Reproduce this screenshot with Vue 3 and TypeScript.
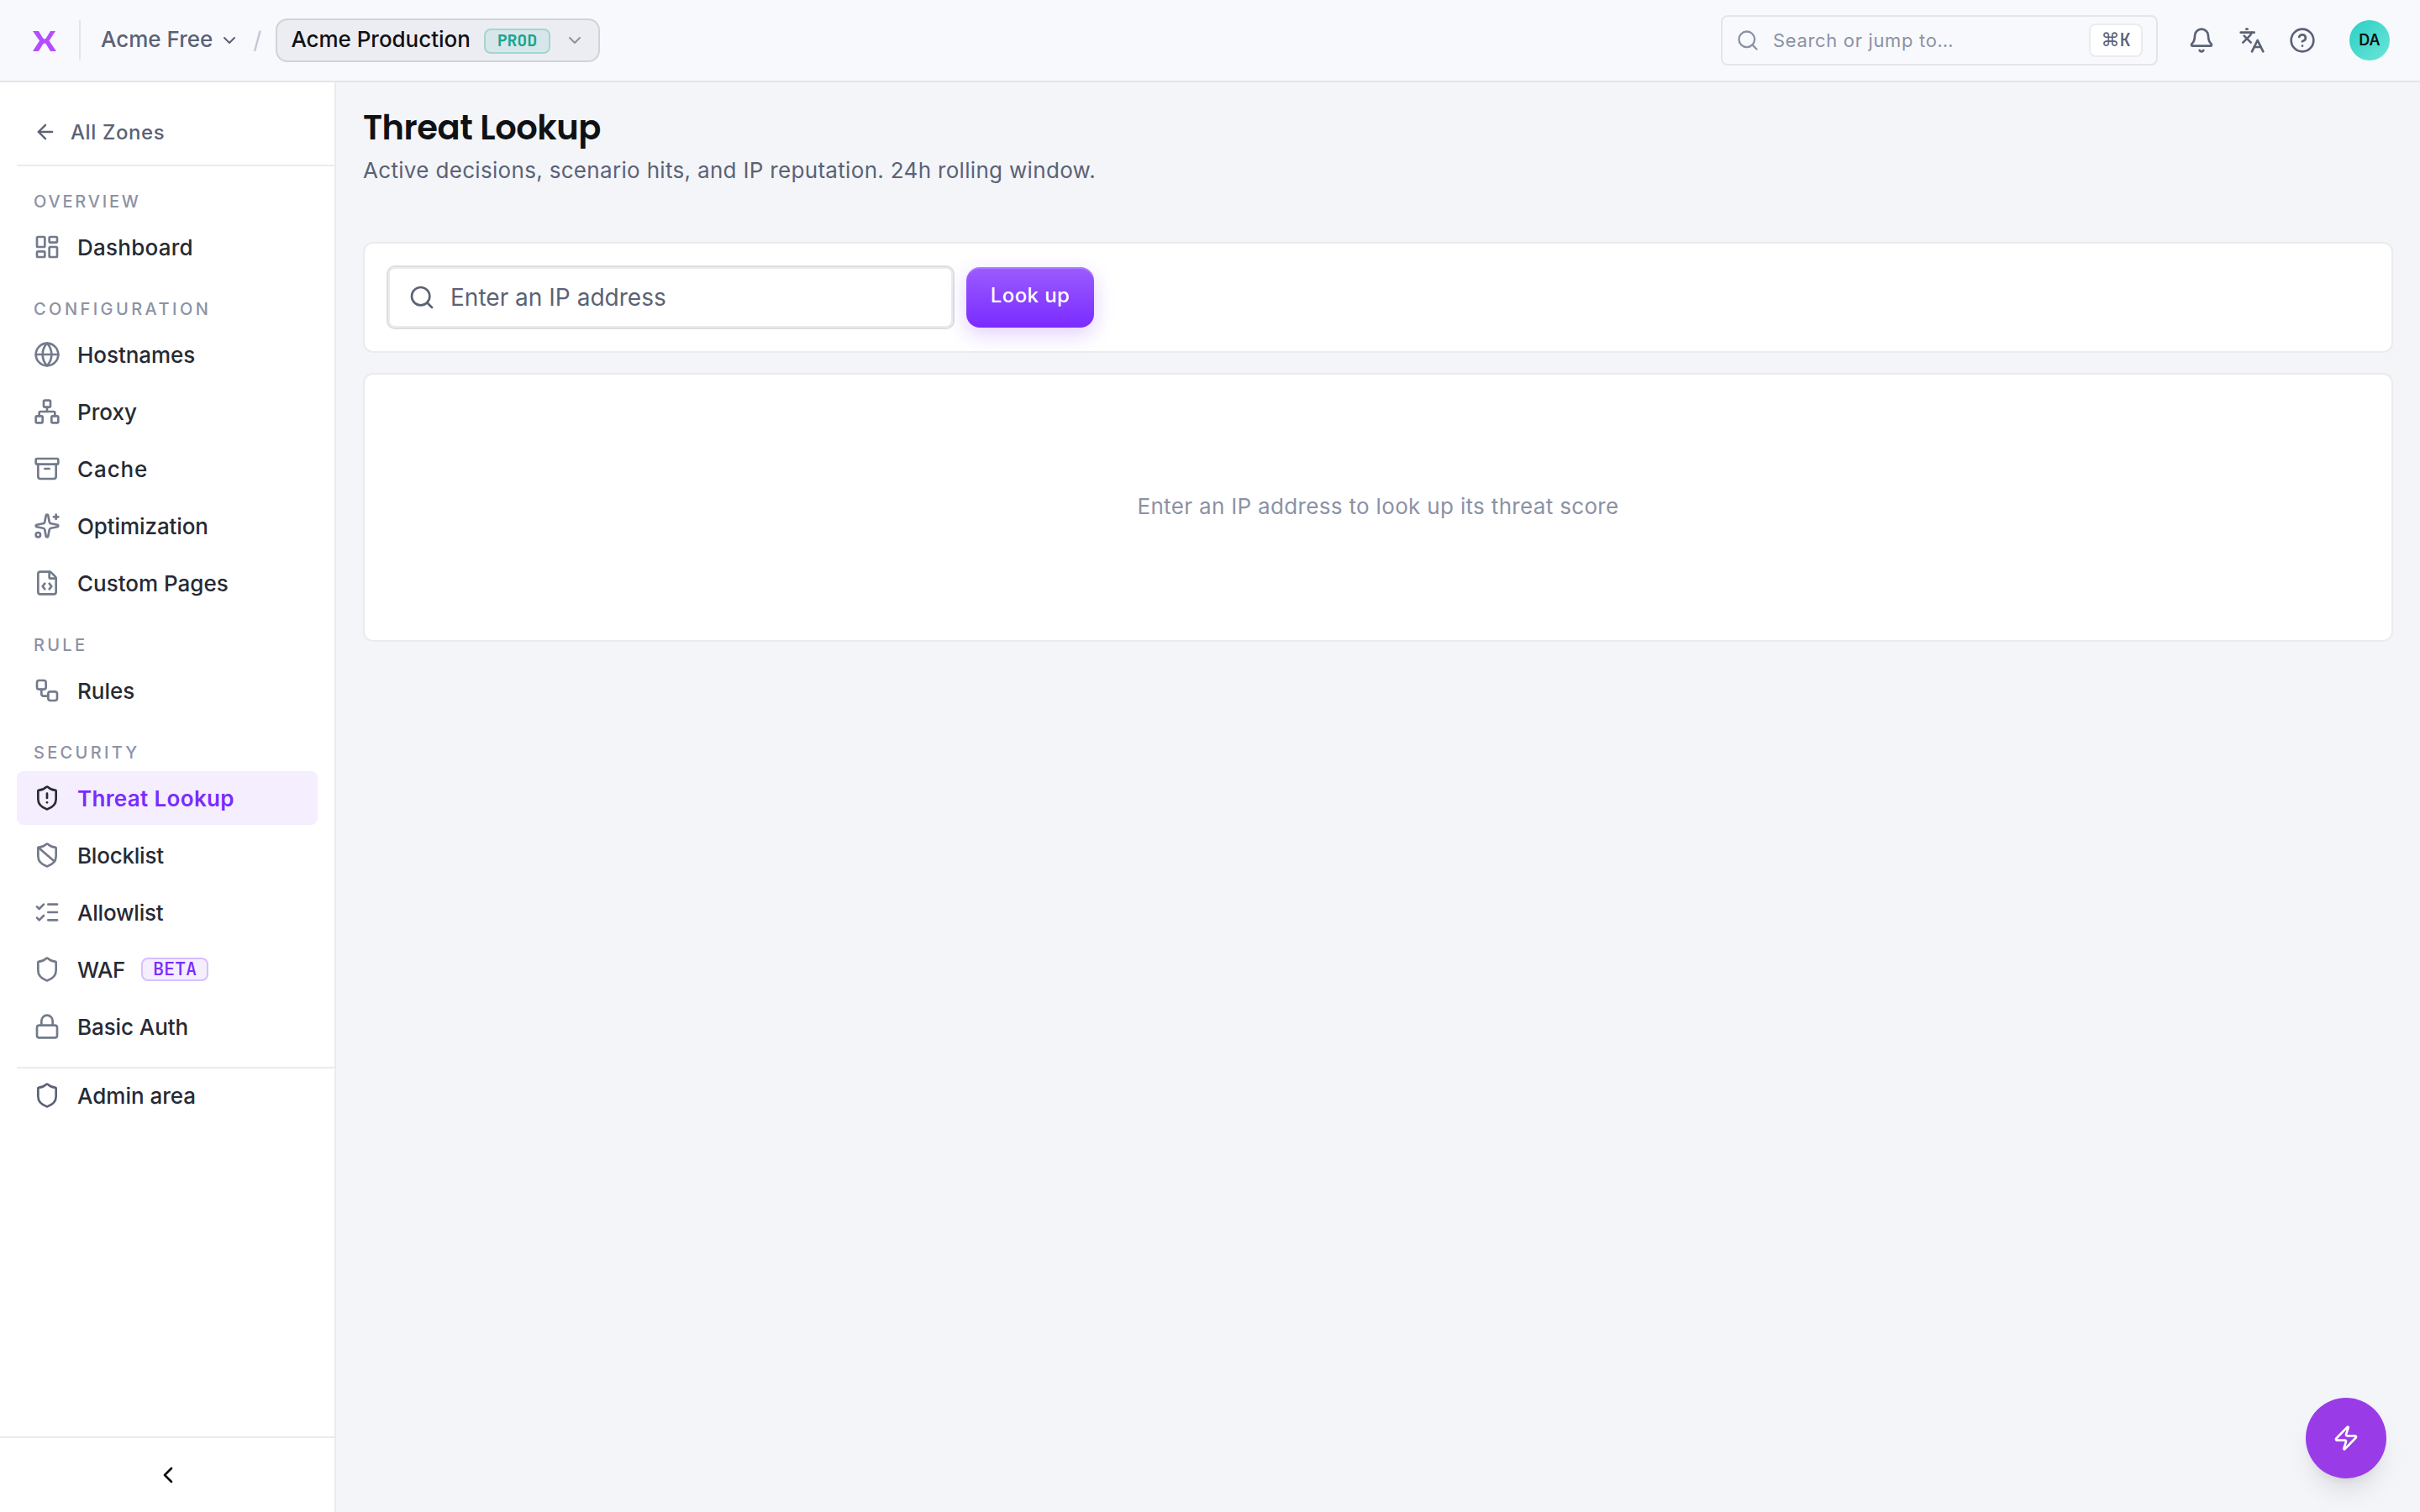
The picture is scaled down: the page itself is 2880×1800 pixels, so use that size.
<script setup lang="ts">
interface Shape { tag: string; a: Record<string, string | number> }
interface Item { label: string; icon: string; track: number; active?: boolean; badge?: string }
interface Group { title: string; track: number; items: Item[] }

const p = (d: string): Shape => ({ tag: 'path', a: { d } })
const r = (x: number, y: number, width: number, height: number, rx: number): Shape => ({ tag: 'rect', a: { x, y, width, height, rx } })
const c = (cx: number, cy: number, rad: number): Shape => ({ tag: 'circle', a: { cx, cy, r: rad } })

const shield = 'M20 13c0 5-3.5 7.5-7.66 8.95a1 1 0 0 1-.67-.01C7.5 20.5 4 18 4 13V6a1 1 0 0 1 1-1c2 0 4.5-1.2 6.24-2.72a1.17 1.17 0 0 1 1.52 0C14.51 3.81 17 5 19 5a1 1 0 0 1 1 1z'

const icons: Record<string, Shape[]> = {
  back: [p('m12 19-7-7 7-7'), p('M19 12H5')],
  down: [p('m6 9 6 6 6-6')],
  left: [p('m15 18-6-6 6-6')],
  dashboard: [r(3, 3, 7, 9, 1), r(14, 3, 7, 5, 1), r(14, 12, 7, 9, 1), r(3, 16, 7, 5, 1)],
  globe: [c(12, 12, 10), p('M12 2a14.5 14.5 0 0 0 0 20 14.5 14.5 0 0 0 0-20'), p('M2 12h20')],
  network: [r(16, 16, 6, 6, 1), r(2, 16, 6, 6, 1), r(9, 2, 6, 6, 1), p('M5 16v-3a1 1 0 0 1 1-1h12a1 1 0 0 1 1 1v3'), p('M12 12V8')],
  archive: [r(2, 3, 20, 5, 1), p('M4 8v11a2 2 0 0 0 2 2h12a2 2 0 0 0 2-2V8'), p('M10 12h4')],
  sparkles: [p('M11.017 2.814a1 1 0 0 1 1.966 0l1.051 5.558a2 2 0 0 0 1.594 1.594l5.558 1.051a1 1 0 0 1 0 1.966l-5.558 1.051a2 2 0 0 0-1.594 1.594l-1.051 5.558a1 1 0 0 1-1.966 0l-1.051-5.558a2 2 0 0 0-1.594-1.594l-5.558-1.051a1 1 0 0 1 0-1.966l5.558-1.051a2 2 0 0 0 1.594-1.594z'), p('M20 2v4'), p('M22 4h-4'), c(4, 20, 2)],
  fileCode: [p('M6 22a2 2 0 0 1-2-2V4a2 2 0 0 1 2-2h8a2.4 2.4 0 0 1 1.704.706l3.588 3.588A2.4 2.4 0 0 1 20 8v12a2 2 0 0 1-2 2z'), p('M14 2v5a1 1 0 0 0 1 1h5'), p('M10 12.5 8 15l2 2.5'), p('m14 12.5 2 2.5-2 2.5')],
  workflow: [r(3, 3, 8, 8, 2), p('M7 11v4a2 2 0 0 0 2 2h4'), r(13, 13, 8, 8, 2)],
  shieldAlert: [p(shield), p('M12 8v4'), p('M12 16h.01')],
  shieldBan: [p(shield), p('m4.243 5.21 14.39 12.472')],
  listChecks: [p('M13 5h8'), p('M13 12h8'), p('M13 19h8'), p('m3 17 2 2 4-4'), p('m3 7 2 2 4-4')],
  shield: [p(shield)],
  lock: [r(3, 11, 18, 11, 2), p('M7 11V7a5 5 0 0 1 10 0v4')],
  search: [p('m21 21-4.34-4.34'), c(11, 11, 8)],
  bell: [p('M10.268 21a2 2 0 0 0 3.464 0'), p('M3.262 15.326A1 1 0 0 0 4 17h16a1 1 0 0 0 .74-1.673C19.41 13.956 18 12.499 18 8A6 6 0 0 0 6 8c0 4.499-1.411 5.956-2.738 7.326')],
  languages: [p('m5 8 6 6'), p('m4 14 6-6 2-3'), p('M2 5h12'), p('M7 2h1'), p('m22 22-5-10-5 10'), p('M14 18h6')],
  help: [c(12, 12, 10), p('M9.09 9a3 3 0 0 1 5.83 1c0 2-3 3-3 3'), p('M12 17h.01')],
  zap: [p('M4 14a1 1 0 0 1-.78-1.63l9.9-10.2a.5.5 0 0 1 .86.46l-1.92 6.02A1 1 0 0 0 13 10h7a1 1 0 0 1 .78 1.63l-9.9 10.2a.5.5 0 0 1-.86-.46l1.92-6.02A1 1 0 0 0 11 14z')]
}

// track is the letter spacing of a label, in px
const groups: Group[] = [
  { title: 'Overview', track: 1.4, items: [{ label: 'Dashboard', icon: 'dashboard', track: 0.13 }] },
  {
    title: 'Configuration',
    track: 1.72,
    items: [
      { label: 'Hostnames', icon: 'globe', track: -0.03 },
      { label: 'Proxy', icon: 'network', track: 0.02 },
      { label: 'Cache', icon: 'archive', track: 0.45 },
      { label: 'Optimization', icon: 'sparkles', track: -0.05 },
      { label: 'Custom Pages', icon: 'fileCode', track: 0 }
    ]
  },
  { title: 'Rule', track: 1.65, items: [{ label: 'Rules', icon: 'workflow', track: 0 }] },
  {
    title: 'Security',
    track: 1.65,
    items: [
      { label: 'Threat Lookup', icon: 'shieldAlert', track: 0.17, active: true },
      { label: 'Blocklist', icon: 'shieldBan', track: -0.11 },
      { label: 'Allowlist', icon: 'listChecks', track: -0.1 },
      { label: 'WAF', icon: 'shield', track: -0.2, badge: 'BETA' },
      { label: 'Basic Auth', icon: 'lock', track: -0.04 }
    ]
  }
]

const Icon = (props: { name: string }) =>
  h('svg', { viewBox: '0 0 24 24', fill: 'none', stroke: 'currentColor', 'stroke-width': 2, 'stroke-linecap': 'round', 'stroke-linejoin': 'round' },
    icons[props.name].map((s) => h(s.tag, s.a)))
Icon.props = ['name']
</script>

<script lang="ts">
import { h } from 'vue'
</script>

<template>
  <div class="app">
    <header class="topbar">
      <svg class="logo" viewBox="0 0 28 24"><path d="M0 0h7l5.200 8.500q1.800 2.200 3.600 0L21 0h6l-7.500 11.500L28 24h-7l-5.200-8.500q-1.800-2.200-3.600 0L7 24H0l8-12.500z" fill="#b44dff" /></svg>
      <span class="rule"></span>
      <button class="org"><span class="name">Acme Free</span><Icon name="down" class="i12" /></button>
      <span class="slash">/</span>
      <button class="zone"><span class="name">Acme Production</span><span class="prod">PROD</span><Icon name="down" class="i12 zone-chev" /></button>
      <div class="search">
        <Icon name="search" class="i14" />
        <span class="search-text">Search or jump to…</span>
        <kbd><span class="cmd">⌘</span>K</kbd>
      </div>
      <nav class="tools">
        <Icon name="bell" class="i16" />
        <Icon name="languages" class="i16" />
        <Icon name="help" class="i16" />
      </nav>
      <span class="avatar">DA</span>
    </header>
    <div class="body">
      <aside class="sidebar">
        <div class="scroll">
          <a class="back"><Icon name="back" class="i14" /><span>All Zones</span></a>
          <section v-for="g in groups" :key="g.title" class="group">
            <h2 :style="{ letterSpacing: g.track + 'px' }">{{ g.title }}</h2>
            <a v-for="i in g.items" :key="i.label" class="item" :class="{ active: i.active }">
              <Icon :name="i.icon" class="i16" /><span :style="{ letterSpacing: i.track + 'px' }">{{ i.label }}</span><em v-if="i.badge">{{ i.badge }}</em>
            </a>
          </section>
          <div class="admin">
            <a class="item"><Icon name="shield" class="i16" /><span>Admin area</span></a>
          </div>
        </div>
        <button class="collapse"><Icon name="left" class="i16" /></button>
      </aside>
      <main>
        <h1>Threat Lookup</h1>
        <p class="sub">Active decisions, scenario hits, and IP reputation. 24h rolling window.</p>
        <div class="card form">
          <label class="field"><Icon name="search" class="i16" /><span>Enter an IP address</span></label>
          <button class="cta">Look up</button>
        </div>
        <div class="card empty">Enter an IP address to look up its threat score</div>
      </main>
    </div>
    <button class="fab"><Icon name="zap" class="i16" /></button>
  </div>
</template>

<style>
html, body { margin: 0; background: #f3f5f9; }
</style>

<style scoped>
/* Authored on a 1440x900 grid and shown at double density */
.app {
  position: relative;
  width: 1440px;
  height: 900px;
  zoom: 2;
  display: flex;
  flex-direction: column;
  background: #f3f5f9;
  color: #0f1115;
  font-family: Inter, "Liberation Sans", sans-serif;
  font-size: 14px;
  line-height: 20px;
}
.app * { box-sizing: border-box; }
button { font: inherit; color: inherit; border: 0; padding: 0; background: none; }
svg { flex: none; display: block; }
.i12 { width: 12px; height: 12px; }
.i14 { width: 14px; height: 14px; }
.i16 { width: 16px; height: 16px; }

.topbar {
  height: 49px;
  flex: none;
  display: flex;
  align-items: center;
  padding: 0 18px 0 19.5px;
  background: #f8f9fd;
  border-bottom: 1px solid #e4e5ea;
}
.logo { width: 14px; height: 12px; margin-top: 1px; }
.rule { width: 1px; height: 24px; margin: 0 12px 0 13.5px; background: #e4e5ea; }
.name { padding-bottom: 1px; }
.org { display: flex; align-items: center; gap: 4px; font-weight: 500; font-size: 13px; color: #5b6275; }
.slash { margin: 0 9px 0 8px; color: #c3c7d2; }
.zone {
  display: flex;
  align-items: center;
  height: 26px;
  margin-left: -.5px;
  padding: 0 8px;
  font-size: 13px;
  font-weight: 500;
  letter-spacing: -.02px;
  background: #ecedf2;
  border: 1px solid #d1d3d8;
  border-radius: 7px;
}
.prod {
  height: 15px;
  margin: 1px 8.5px 0 8px;
  padding: 0 7px;
  font: 600 10px/12px "JetBrains Mono", Roboto, sans-serif;
  letter-spacing: -.1px;
  color: #1aa58e;
  background: #d7e6ea;
  border: 1px solid #a3d6cf;
  border-radius: 4px;
}
.zone-chev { color: #8b92a5; }
.search {
  width: 260px;
  height: 30px;
  margin-left: auto;
  padding: 0 8px 0 8px;
  display: flex;
  align-items: center;
  color: #8b92a5;
  border: 1px solid #e4e5ea;
  border-radius: 4px;
}
.search-text { margin-left: 8px; font-size: 11px; flex: 1; letter-spacing: .33px; }
kbd {
  width: 32px;
  height: 20px;
  display: flex;
  align-items: center;
  justify-content: center;
  font: 500 11px/18px "JetBrains Mono", monospace;
  color: #5b6275;
  background: #fff;
  border: 1px solid #ebebed;
  border-radius: 4px;
}
.cmd { font-family: "DejaVu Sans", sans-serif; font-weight: 400; }
.tools { display: flex; gap: 14px; margin: 0 20px 0 18px; color: #5b6275; }
.avatar {
  width: 24px;
  height: 24px;
  border-radius: 50%;
  background: linear-gradient(135deg, #2dcfc4, #6be5d9);
  font-size: 9px;
  font-weight: 600;
  line-height: 24px;
  text-align: center;
}

.body { flex: 1; display: flex; min-height: 0; }
.sidebar { width: 200px; display: flex; flex-direction: column; background: #fff; border-right: 1px solid #ebebed; }
.scroll { flex: 1; padding: 10px 0 0 10px; }
.back {
  height: 40px;
  display: flex;
  align-items: center;
  gap: 8px;
  padding-left: 10px;
  font-size: 12px;
  font-weight: 500;
  letter-spacing: .3px;
  color: #5b6275;
  border-bottom: 1px solid #ebebed;
}
.back span, .item span { padding-top: 1px; }
.group { padding-right: 10px; margin-bottom: 8px; }
.group h2 {
  margin: 0;
  padding: 13.5px 10px 3.5px;
  font-size: 10px;
  line-height: 15px;
  font-weight: 500;
  text-transform: uppercase;
  color: #8b92a5;
}
.group + .group h2 { padding-top: 5.5px; }
.item {
  height: 32px;
  display: flex;
  align-items: center;
  gap: 10px;
  padding: 0 10px;
  font-size: 13px;
  font-weight: 500;
  color: #262a35;
  border-radius: 4px;
}
.item + .item { margin-top: 2px; }
.item svg { color: #737a8c; }
.item.active { background: #f4eeff; color: #7a2bff; font-weight: 600; }
.item.active svg { color: #2b2b33; }
.item em {
  height: 14px;
  margin-left: -.5px;
  padding: 0 6px;
  font: 500 11px/12px "JetBrains Mono", Roboto, sans-serif;
  letter-spacing: -.1px;
  color: #7a2bff;
  background: #f4eeff;
  border: 1px solid #d7bfff;
  border-radius: 4px;
}
.admin { border-top: 1px solid #ebebed; }
.admin .item svg { color: #5b6275; }
.collapse { height: 45px; padding-left: 1px; display: flex; align-items: center; justify-content: center; border-top: 1px solid #ebebed; }

main { flex: 1; padding: 14px 16px; }
h1 { margin: 0; font: 600 20px/26px Poppins, Inter, sans-serif; letter-spacing: -.23px; }
.sub { margin: 2.5px 0 0; font-size: 13px; line-height: 20px; letter-spacing: .16px; color: #5b6275; }
.card { background: #fff; border: 1px solid #ebebed; border-radius: 6px; }
.form { height: 66px; margin-top: 32.5px; padding: 0 13px; display: flex; align-items: center; gap: 7px; }
.field {
  width: 338px;
  height: 38px;
  display: flex;
  align-items: center;
  gap: 9px;
  padding: 0 12px;
  font-size: 14px;
  letter-spacing: .01px;
  color: #5b6275;
  border: 1px solid #dedede;
  box-shadow: inset 0 0 0 1px #ebebed;
  border-radius: 5px;
}
.cta {
  width: 76px;
  height: 36px;
  padding-bottom: 2px;
  font-size: 12px;
  font-weight: 500;
  letter-spacing: .2px;
  color: #fff;
  background: linear-gradient(#9b5cff, #7a2bff);
  border-radius: 8px;
  box-shadow: 0 4px 12px rgba(122, 43, 255, .22), inset 0 1px 0 rgba(255, 255, 255, .2);
}
.empty { height: 160px; margin-top: 12px; padding-bottom: 1px; display: flex; align-items: center; justify-content: center; font-size: 13px; letter-spacing: .165px; color: #8b92a5; }
.fab {
  position: absolute;
  right: 20px;
  bottom: 20px;
  width: 48px;
  height: 48px;
  display: flex;
  align-items: center;
  justify-content: center;
  color: #fff;
  background: #9a3be8;
  border-radius: 50%;
  box-shadow: 0 10px 15px -3px rgba(0, 0, 0, .1), 0 4px 6px -4px rgba(0, 0, 0, .1);
}
</style>
